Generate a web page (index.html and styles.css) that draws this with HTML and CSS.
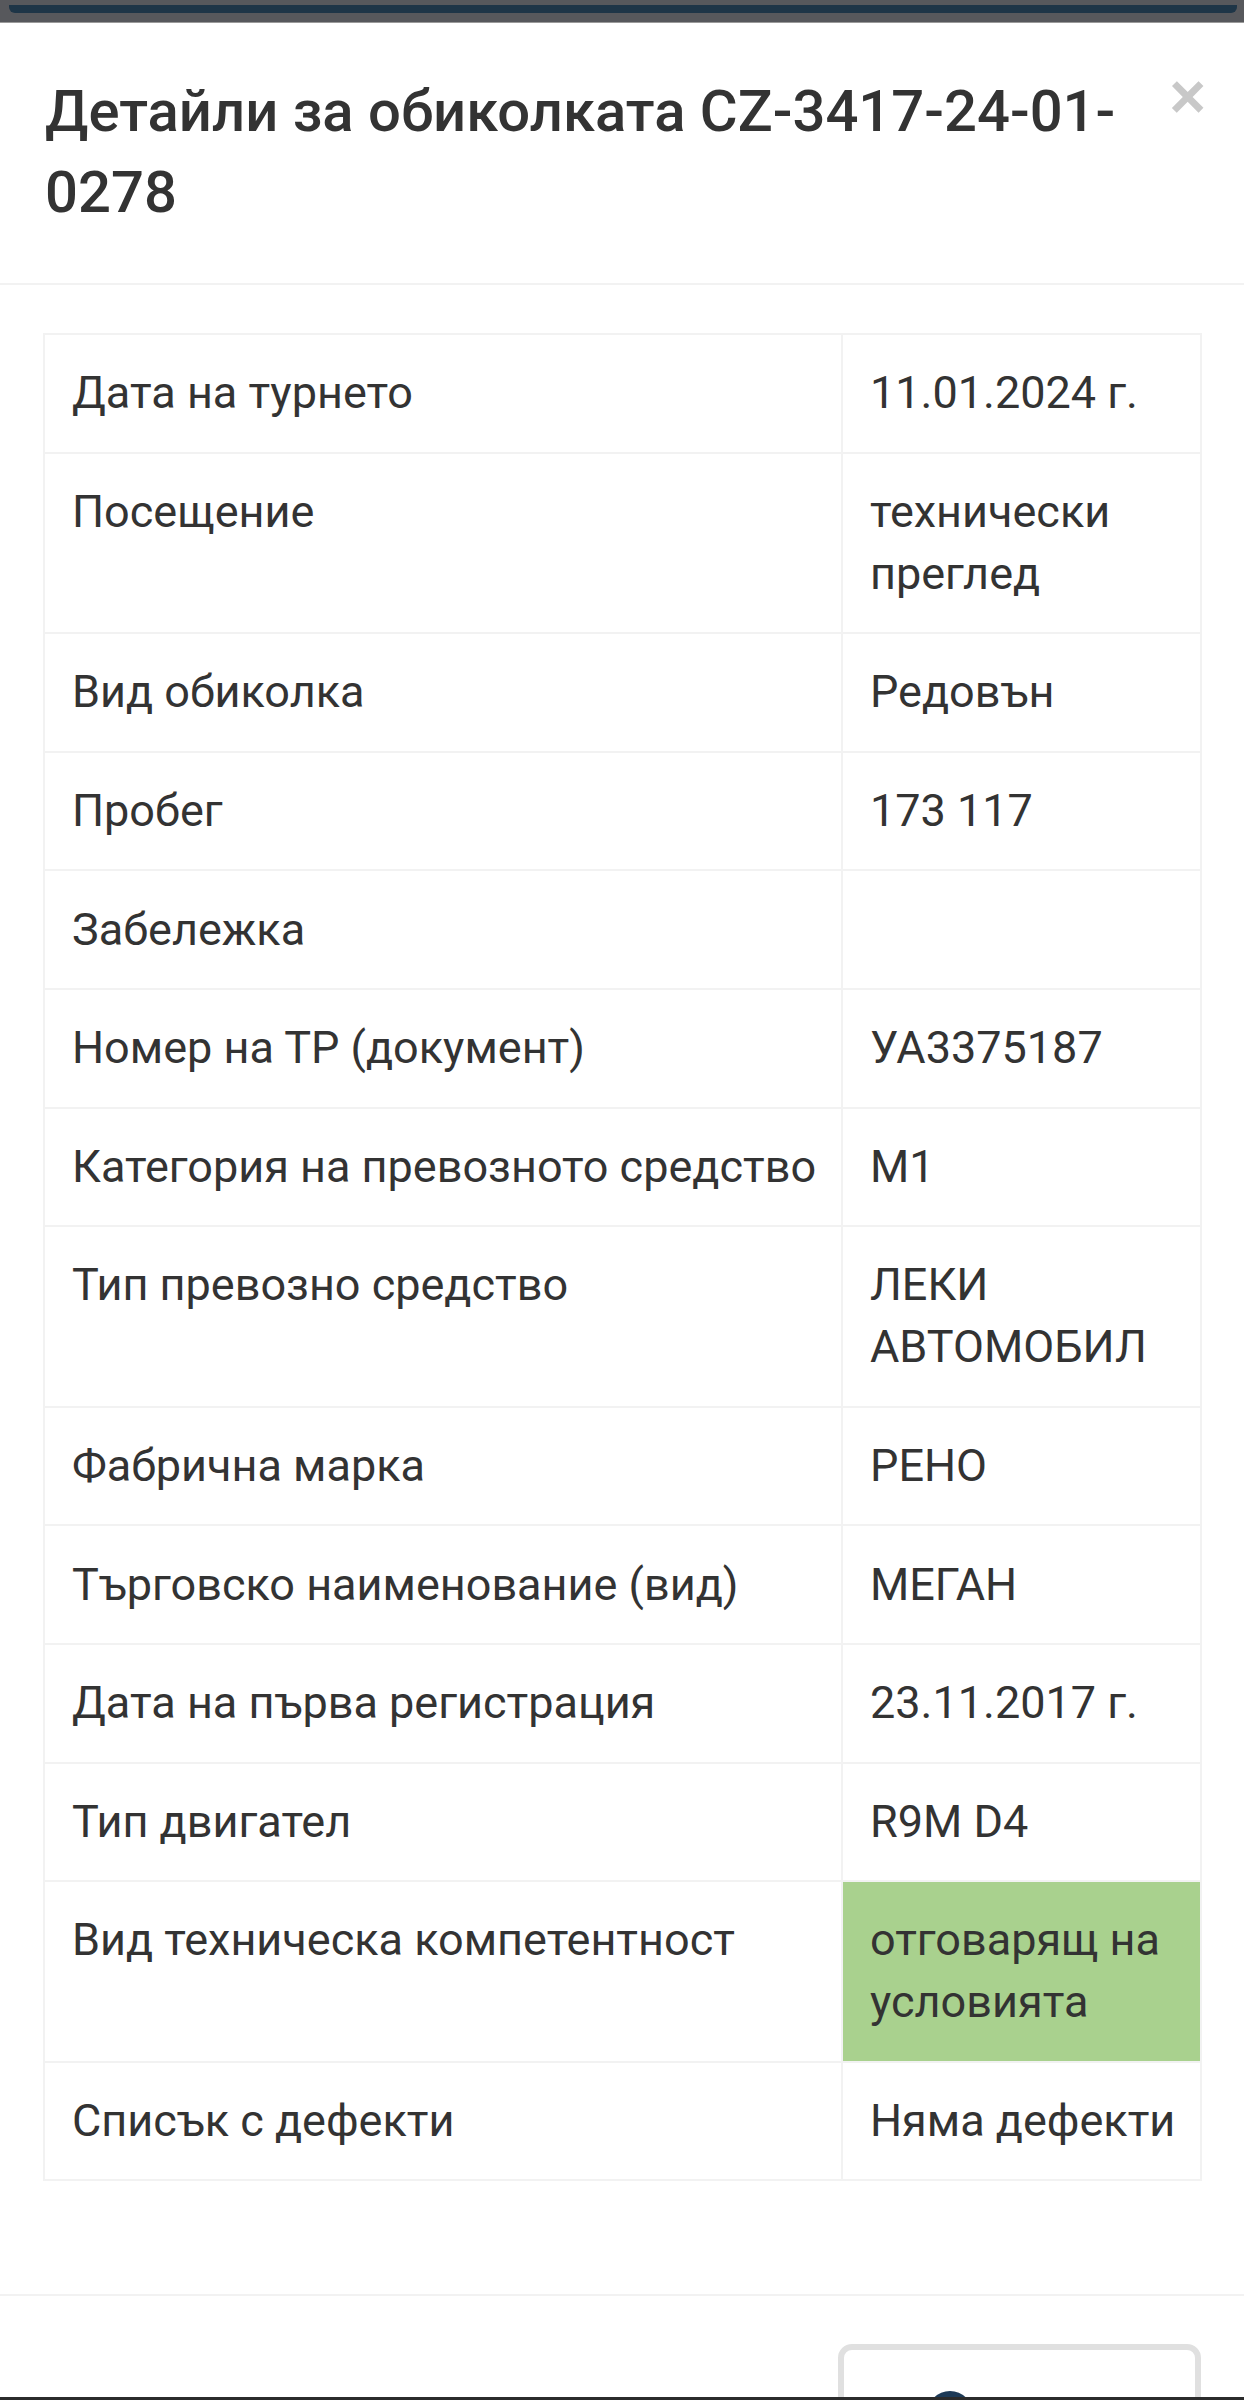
FILE: index.html
```html
<!DOCTYPE html>
<html lang="bg">

<head>
    <meta charset="UTF-8">
    <meta name="viewport" content="width=device-width, initial-scale=1.0">
    <title>Детайли за обиколката</title>
    <link rel="stylesheet" href="styles.css">
</head>

<body>
    <div class="backdrop-strip">
        <div class="page-behind"></div>
    </div>
    <div class="modal">
        <div class="modal-header">
            <h4 class="modal-title">Детайли за обиколката CZ-3417-24-01-0278</h4>
            <button class="close" type="button">×</button>
        </div>
        <div class="modal-body">
            <table class="details">
                <colgroup>
                    <col class="col-label">
                    <col class="col-value">
                </colgroup>
                <tr><td>Дата на турнето</td><td>11.01.2024 г.</td></tr>
                <tr><td>Посещение</td><td>технически преглед</td></tr>
                <tr><td>Вид обиколка</td><td>Редовън</td></tr>
                <tr><td>Пробег</td><td>173 117</td></tr>
                <tr><td>Забележка</td><td></td></tr>
                <tr><td>Номер на ТР (документ)</td><td>УА3375187</td></tr>
                <tr><td>Категория на превозното средство</td><td>M1</td></tr>
                <tr><td>Тип превозно средство</td><td>ЛЕКИ АВТОМОБИЛ</td></tr>
                <tr><td>Фабрична марка</td><td>РЕНО</td></tr>
                <tr><td>Търговско наименование (вид)</td><td>МЕГАН</td></tr>
                <tr><td>Дата на първа регистрация</td><td>23.11.2017 г.</td></tr>
                <tr><td>Тип двигател</td><td>R9M D4</td></tr>
                <tr><td>Вид техническа компетентност</td><td class="ok">отговарящ на условията</td></tr>
                <tr><td>Списък с дефекти</td><td>Няма дефекти</td></tr>
            </table>
        </div>
        <div class="modal-footer">
            <button class="btn-dismiss" type="button"><span class="btn-icon"></span>Затвори</button>
        </div>
    </div>
    <div class="screen-edge"></div>
</body>

</html>
```

FILE: styles.css
```css
body {
    margin: 0;
    background: #fff;
    color: #333;
    font-family: Roboto, "Noto Sans", sans-serif;
    font-size: 45px;
    line-height: 62px;
}

.backdrop-strip {
    height: 23px;
    padding: 5px 7px 0 9px;
    box-sizing: border-box;
    background: #57585c;
    border-bottom: 1px solid #9a9a9a;
}

.page-behind {
    height: 8px;
    background: #1e3547;
    border-radius: 0 0 6px 6px;
}

.modal {
    background: #fff;
}

.modal-header {
    display: flex;
    align-items: flex-start;
    padding: 48px 38px 50px 45px;
    border-bottom: 2px solid #f2f2f2;
}

.modal-title {
    flex: 1;
    margin: 0;
    padding-right: 20px;
    font-size: 58px;
    line-height: 81px;
    font-weight: 500;
    color: #333;
}

.close {
    margin-top: -6px;
    padding: 0;
    border: 0;
    background: none;
    font-family: "Liberation Sans", sans-serif;
    font-size: 63px;
    line-height: 63px;
    font-weight: bold;
    color: #c8c8c8;
}

.modal-body {
    padding: 48px 42px 49px 43px;
}

.details {
    width: 100%;
    table-layout: fixed;
    border-collapse: collapse;
    margin-bottom: 64px;
}

.col-label {
    width: 798px;
}

.details td {
    border: 2px solid #f2f2f2;
    padding: 27.3px 10px 27.3px 27px;
    vertical-align: top;
}

.details td + td {
    padding-left: 27px;
    padding-right: 6px;
}

.details td.ok {
    background: #a9d18e;
}

.modal-footer {
    display: flex;
    justify-content: flex-end;
    padding: 48px 43px;
    border-top: 2px solid #f2f2f2;
}

.btn-dismiss {
    display: flex;
    align-items: center;
    justify-content: center;
    gap: 14px;
    width: 363px;
    padding: 33px 20px 33px 70px;
    border: 6px solid #e0e0e0;
    border-radius: 14px;
    background: #fff;
    color: #333;
    font-family: Roboto, "Noto Sans", sans-serif;
    font-size: 45px;
    line-height: 62px;
}

.btn-icon {
    width: 46px;
    height: 46px;
    border-radius: 50%;
    background: #1d3a57;
}

.screen-edge {
    position: fixed;
    left: 0;
    right: 0;
    bottom: 0;
    height: 3px;
    background: #2b2b2b;
}
```
